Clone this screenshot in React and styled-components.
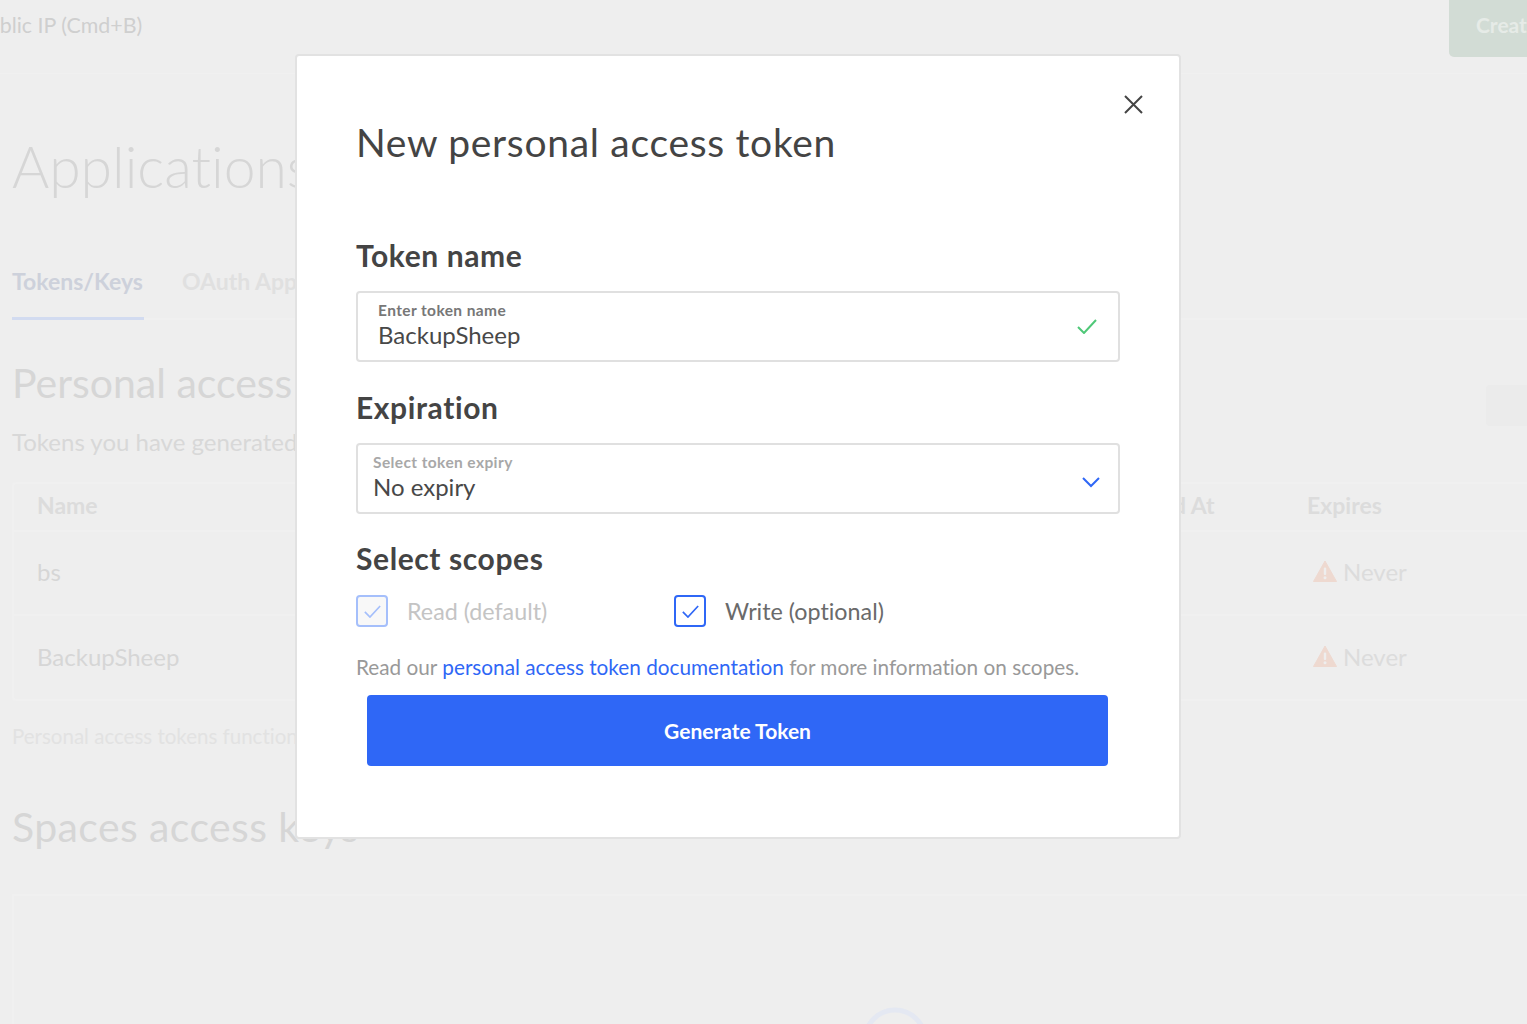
import React from 'react';
import styled, { createGlobalStyle } from 'styled-components';

const GlobalStyle = createGlobalStyle`
    html, body {
        margin: 0;
        padding: 0;
        background: #eeeeee;
    }
    * {
        box-sizing: border-box;
    }
`

const FONT = `'Lato', 'Open Sans', sans-serif`
const BLUE = '#2f67f6'

const Page = styled.div`
    position: relative;
    width: 1527px;
    height: 1024px;
    overflow: hidden;
    background: #eeeeee;
    font-family: ${FONT};
    font-variant-ligatures: none;
`

const TopBar = styled.header`
    height: 74px;
    display: flex;
    align-items: flex-start;
    justify-content: space-between;
    border-bottom: 1px solid #f0f0f0;
`

const BarHint = styled.span`
    margin: 12px 0 0 -25px;
    font-size: 21.4px;
    line-height: 26px;
    color: #cfcfcf;
`

const CreateButton = styled.div`
    width: 120px;
    height: 57px;
    margin-right: -42px;
    padding: 12px 0 0 27px;
    flex-shrink: 0;
    background: #d2dcd5;
    border-radius: 0 0 0 5px;
    color: #e6ebe7;
    font-size: 21px;
    line-height: 26px;
    font-weight: 700;
`

const Main = styled.main`
    width: 1766px;
    margin-left: 12px;
`

const PageTitle = styled.h1`
    margin: 56px 0 0;
    font-size: 57px;
    line-height: 72px;
    font-weight: 300;
    color: #d6d6d6;
`

const Tabs = styled.nav`
    display: flex;
    gap: 38px;
    height: 84px;
    margin-top: 34px;
    padding-top: 8px;
    border-bottom: 2px solid #f0f0f0;
`

const Tab = styled.span`
    height: 76px;
    padding-top: 22px;
    width: ${({active}) => active ? '132px' : 'auto'};
    font-size: 23px;
    line-height: 30px;
    font-weight: 700;
    color: ${({active}) => active ? '#cdd1db' : '#e0e0e0'};
    border-bottom: ${({active}) => active ? '3px solid #d2dbf0' : 'none'};
`

const SectionHead = styled.div`
    display: flex;
    justify-content: space-between;
    margin-top: 38px;
`

const SectionTitle = styled.h2`
    margin: 0;
    font-size: 41px;
    line-height: 50px;
    font-weight: 400;
    color: #d6d6d6;
`

const SpacesTitle = styled(SectionTitle)`
    margin-top: 53px;
    letter-spacing: 0.4px;
`

const GhostButton = styled.div`
    width: 292px;
    height: 41px;
    margin-top: 27px;
    background: #ebebeb;
    border-radius: 4px;
`

const SectionText = styled.p`
    margin: 2px 0 0;
    font-size: 24px;
    line-height: 28px;
    color: #d8d8d8;
`

const Table = styled.div`
    margin-top: 26px;
    height: 219px;
    border: 2px solid #f0f0f0;
    border-radius: 4px;
`

const Row = styled.div`
    display: grid;
    grid-template-columns: 1068px 202px 1fr;
    align-items: center;
    height: ${({h}) => h}px;
    padding: 0 0 4px 23px;
    border-bottom: ${({last}) => last ? 'none' : '2px solid #f0f0f0'};
`

const HeadCell = styled.span`
    font-size: 23px;
    font-weight: 700;
    color: #dcdcdc;
`

const Cell = styled.span`
    display: flex;
    align-items: center;
    gap: 6px;
    font-size: 24px;
    color: #d6d6d6;
`

const Never = styled(Cell)`
    padding-left: 6px;
    color: #dcdcdc;
`

const Footnote = styled.p`
    margin: 22px 0 0;
    font-size: 20.5px;
    line-height: 26px;
    color: #e2e2e2;
`

const Panel = styled.div`
    height: 200px;
    margin-top: 42px;
    display: flex;
    justify-content: center;
    padding-top: 109px;
    border: 2px solid #f0f0f0;
`

const Modal = styled.section`
    position: absolute;
    left: 295px;
    top: 54px;
    width: 886px;
    height: 785px;
    padding: 60px 59px 0;
    background: #ffffff;
    border: 2px solid #e2e2e2;
    border-radius: 4px;
    color: #444444;
`

const CloseButton = styled.button`
    position: absolute;
    top: 37px;
    right: 35px;
    width: 22px;
    height: 22px;
    padding: 0;
    display: flex;
    background: none;
    border: none;
`

const ModalTitle = styled.h2`
    margin: 1px 0 0;
    font-size: 39px;
    line-height: 50px;
    font-weight: 400;
    letter-spacing: 0.7px;
    color: #444444;
`

const FieldTitle = styled.h3`
    margin: ${({top}) => top}px 0 0;
    font-size: 30px;
    line-height: 36px;
    font-weight: 700;
    letter-spacing: 0.6px;
    color: #444444;
`

const Field = styled.div`
    display: flex;
    align-items: center;
    justify-content: space-between;
    height: 71px;
    margin-top: 18px;
    padding: 0 ${({select}) => select ? '17px' : '21px'} 0 ${({select}) => select ? '15px' : '20px'};
    border: 2px solid #e0e0e0;
    border-radius: 4px;
`

const FieldText = styled.div`
    display: flex;
    flex-direction: column;
    padding-bottom: 4px;
`

const FieldLabel = styled.span`
    font-size: 15.5px;
    line-height: 20px;
    font-weight: 700;
    letter-spacing: 0.4px;
    color: ${({muted}) => muted ? '#a8a8a8' : '#777777'};
`

const FieldValue = styled.span`
    font-size: 24px;
    line-height: 30px;
    color: #484848;
`

const Chevron = styled.svg`
    margin-top: 7px;
`

const Scopes = styled.div`
    display: flex;
    margin-top: 19px;
`

const Scope = styled.label`
    display: flex;
    align-items: center;
    gap: 19px;
    width: 318px;
    font-size: 23.3px;
    color: ${({disabled}) => disabled ? '#c4c4c4' : '#6a6a6a'};
`

const CheckBox = styled.span`
    display: flex;
    align-items: center;
    justify-content: center;
    width: 32px;
    height: 32px;
    flex-shrink: 0;
    border: 2px solid ${({disabled}) => disabled ? '#a5bffb' : BLUE};
    border-radius: 4px;
    background: ${({disabled}) => disabled ? '#f8f8f8' : '#ffffff'};
`

const HelpText = styled.p`
    margin: 27px 0 0;
    font-size: 20.75px;
    line-height: 26px;
    color: #999999;
`

const DocLink = styled.a`
    color: ${BLUE};
    text-decoration: none;
`

const GenerateButton = styled.button`
    display: block;
    width: 741px;
    height: 71px;
    margin: 15px 0 0 11px;
    background: ${BLUE};
    border: none;
    border-radius: 4px;
    color: #ffffff;
    font-family: ${FONT};
    font-size: 21px;
    font-weight: 700;
`

const Warning = () => (
    <svg width="24" height="22" viewBox="0 0 24 22">
        <path d="M12 1 L23.5 21.5 H0.5 Z" fill="#eed9d0" stroke="#eed9d0" strokeLinejoin="round" />
        <rect x="10.8" y="7.5" width="2.4" height="7.5" rx="1" fill="#eeeeee" />
        <circle cx="12" cy="17.8" r="1.5" fill="#eeeeee" />
    </svg>
)

const Tick = ({color, width, height, stroke}) => (
    <svg width={width} height={height} viewBox="0 0 20 15" fill="none">
        <path d="M1 8 L7 14 L19 1" stroke={color} strokeWidth={stroke} />
    </svg>
)

const App = () => {
    return (
        <Page>
            <GlobalStyle />
            <TopBar>
                <BarHint>Public IP (Cmd+B)</BarHint>
                <CreateButton>Create</CreateButton>
            </TopBar>
            <Main>
                <PageTitle>Applications</PageTitle>
                <Tabs>
                    <Tab active>Tokens/Keys</Tab>
                    <Tab>OAuth Applications</Tab>
                </Tabs>
                <SectionHead>
                    <SectionTitle>Personal access tokens</SectionTitle>
                    <GhostButton />
                </SectionHead>
                <SectionText>Tokens you have generated to access the API.</SectionText>
                <Table>
                    <Row h={48}>
                        <HeadCell>Name</HeadCell>
                        <HeadCell>Created At</HeadCell>
                        <HeadCell>Expires</HeadCell>
                    </Row>
                    <Row h={84}>
                        <Cell>bs</Cell>
                        <Cell />
                        <Never><Warning />Never</Never>
                    </Row>
                    <Row h={84} last>
                        <Cell>BackupSheep</Cell>
                        <Cell />
                        <Never><Warning />Never</Never>
                    </Row>
                </Table>
                <Footnote>Personal access tokens function like a combined name and password.</Footnote>
                <SpacesTitle>Spaces access keys</SpacesTitle>
                <Panel>
                    <svg width="70" height="70" viewBox="0 0 70 70" fill="none">
                        <circle cx="35" cy="35" r="30" stroke="#e4e8f2" strokeWidth="5" />
                    </svg>
                </Panel>
            </Main>
            <Modal>
                <CloseButton aria-label="Close">
                    <svg width="22" height="22" viewBox="0 0 22 22" fill="none">
                        <path d="M3 3 L20 20 M20 3 L3 20" stroke="#444444" strokeWidth="2" />
                    </svg>
                </CloseButton>
                <ModalTitle>New personal access token</ModalTitle>
                <FieldTitle top={70}>Token name</FieldTitle>
                <Field>
                    <FieldText>
                        <FieldLabel>Enter token name</FieldLabel>
                        <FieldValue>BackupSheep</FieldValue>
                    </FieldText>
                    <Tick color="#4fc878" width={20} height={15} stroke={2} />
                </Field>
                <FieldTitle top={27}>Expiration</FieldTitle>
                <Field select>
                    <FieldText>
                        <FieldLabel muted>Select token expiry</FieldLabel>
                        <FieldValue>No expiry</FieldValue>
                    </FieldText>
                    <Chevron width="20" height="14" viewBox="0 0 20 14" fill="none">
                        <path d="M2 3 L10 11 L18 3" stroke={BLUE} strokeWidth="2" />
                    </Chevron>
                </Field>
                <FieldTitle top={26}>Select scopes</FieldTitle>
                <Scopes>
                    <Scope disabled>
                        <CheckBox disabled><Tick color="#a5bffb" width={17} height={13} stroke={2} /></CheckBox>
                        Read (default)
                    </Scope>
                    <Scope>
                        <CheckBox><Tick color={BLUE} width={17} height={13} stroke={2} /></CheckBox>
                        Write (optional)
                    </Scope>
                </Scopes>
                <HelpText>
                    Read our <DocLink href="#">personal access token documentation</DocLink> for more information on scopes.
                </HelpText>
                <GenerateButton>Generate Token</GenerateButton>
            </Modal>
        </Page>
    );
};

export default App;
